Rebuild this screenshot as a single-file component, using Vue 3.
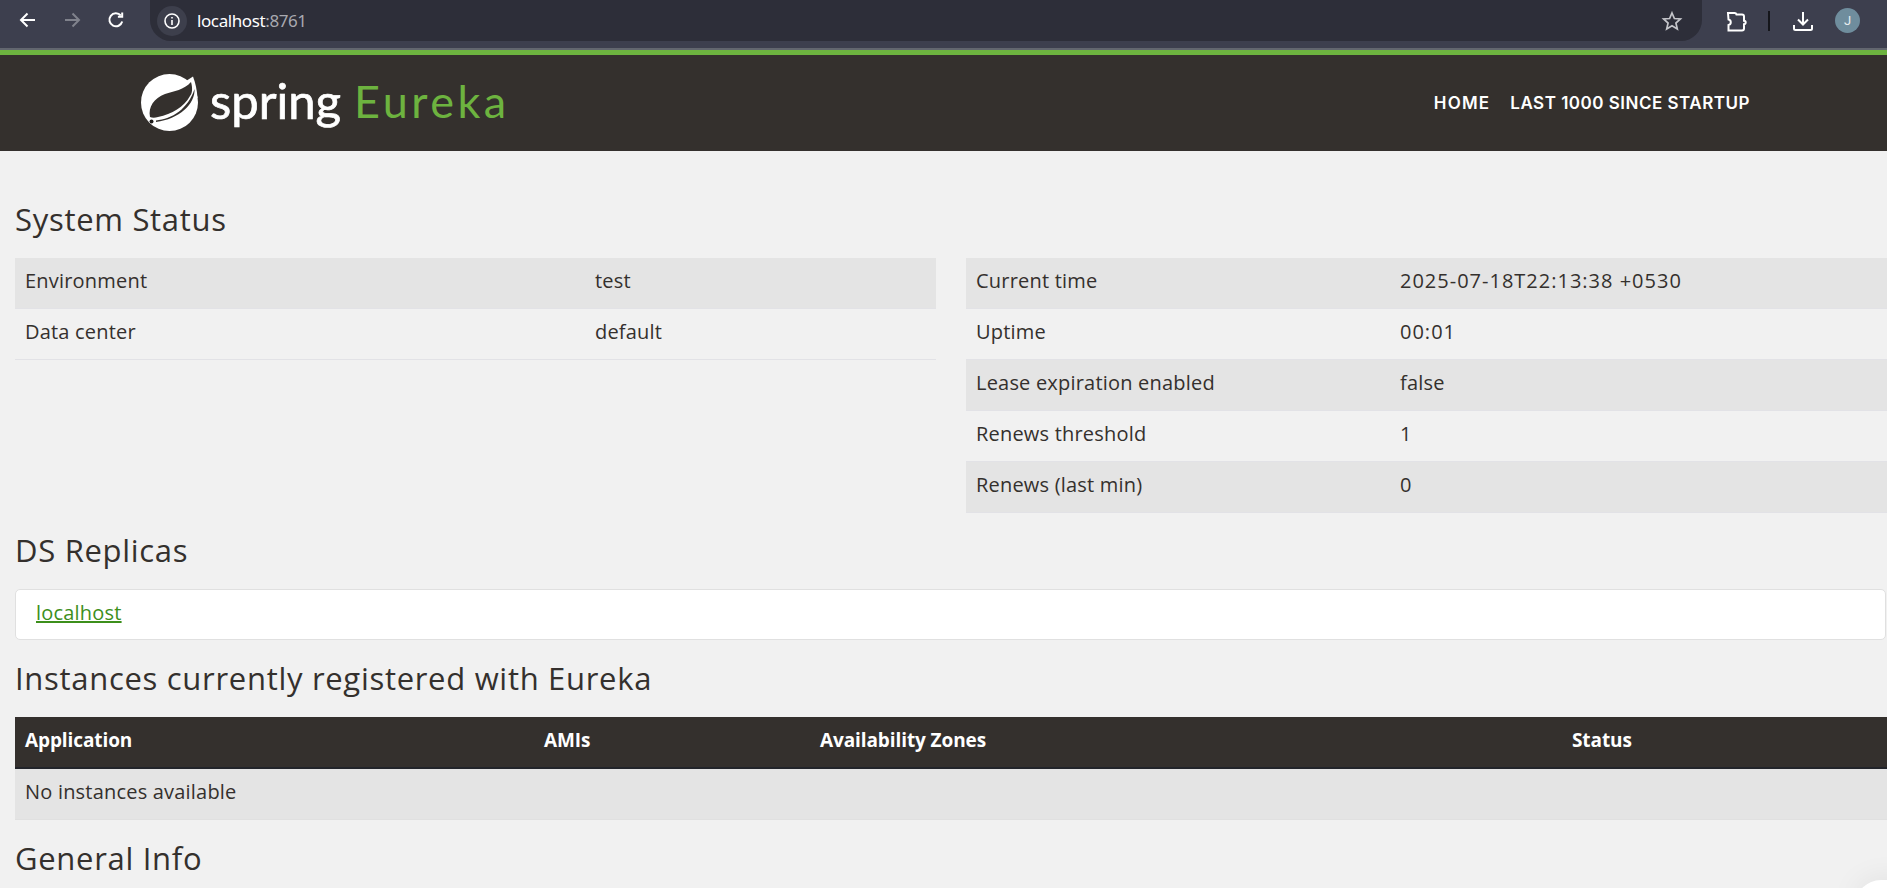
<script setup>
const leftRows = [
  ['Environment', 'test'],
  ['Data center', 'default'],
]
const rightRows = [
  ['Current time', '2025-07-18T22:13:38 +0530'],
  ['Uptime', '00:01'],
  ['Lease expiration enabled', 'false'],
  ['Renews threshold', '1'],
  ['Renews (last min)', '0'],
]
const hasDigits = (v) => /\d/.test(v)
</script>

<template>
  <div class="page">
    <div class="browser">
      <div class="nav-btns">
        <svg width="20" height="20" viewBox="0 0 20 20" class="ico"><path d="M17 10H3.5M9.5 3.5 3 10l6.500 6.500" /></svg>
        <svg width="20" height="20" viewBox="0 0 20 20" class="ico dim"><path d="M3 10h13.500M10.500 3.500 17 10l-6.500 6.500" /></svg>
        <svg width="20" height="20" viewBox="0 0 20 20" class="ico"><path d="M16.200 11.500A6.500 6.500 0 1 1 14.800 5.500" /><path d="M16.200 2.500v4.300h-4.300" /></svg>
      </div>
      <div class="omnibox">
        <span class="info">
          <svg width="18" height="18" viewBox="0 0 18 18" class="ico thin"><circle cx="9" cy="9" r="7" /><path d="M9 8v5M9 5v1.500" /></svg>
        </span>
        <span class="url">localhost<span class="port">:8761</span></span>
        <svg width="22" height="22" viewBox="0 0 22 22" class="ico star"><path d="m11 3 2.400 5.500 6 .5-4.500 4 1.400 5.900L11 15.800l-5.300 3.100L7.100 13 2.600 9l6-.5z" /></svg>
      </div>
      <div class="tools">
        <svg width="22" height="22" viewBox="0 0 22 22" class="ico puzzle"><path d="M3 3h6.500a2 2 0 0 1 2 1.500h5.500a2 2 0 0 1 2 2v4.300a1.700 1.700 0 0 1 0 3.400v4.300a2 2 0 0 1-2 2H3.500v-5.500a2.800 2.800 0 0 0 0-5.500z" /></svg>
        <span class="sep"></span>
        <svg width="22" height="22" viewBox="0 0 22 22" class="ico dl"><path d="M11 2v12M6 9.500l5 5 5-5M2 15v3.500a1.500 1.500 0 0 0 1.500 1.500h15a1.500 1.500 0 0 0 1.500-1.500V15" /></svg>
        <span class="avatar">J</span>
      </div>
    </div>
    <div class="strip"></div>

    <header class="topbar">
      <div class="brand">
        <svg class="leaf" width="58" height="58" viewBox="0 0 58 58">
          <circle cx="28.500" cy="28.500" r="28.500" fill="#fff" />
          <path fill="#34302d" d="M44 0H58V22L54.500 6 47 7Z" />
          <path fill="#fff" d="M45 7 52 2.500C54.500 9 56 16 56.500 24L52 24Z" />
          <path fill="#34302d" d="M9 43C7 33 13 24 24 20 33 17 43 16 50 8 52 15 51 20 49 22 43 33 31 40 17 43 14 44 11 44 9 43Z" />
          <path fill="#34302d" d="M15 46.500C31 45 47 35 53.500 15 54.500 30 38 45 15 48Z" />
          <circle cx="10.500" cy="47.500" r="2" fill="#1f1c1a" />
        </svg>
        <span class="spring">spring</span>
        <span class="eureka">Eureka</span>
      </div>
      <nav class="links">
        <a>HOME</a>
        <a>LAST 1000 SINCE STARTUP</a>
      </nav>
    </header>

    <main class="content">
      <h2>System Status</h2>
      <div class="status">
        <table class="info-table left">
          <tbody>
            <tr v-for="row in leftRows" :key="row[0]">
              <td>{{ row[0] }}</td>
              <td>{{ row[1] }}</td>
            </tr>
          </tbody>
        </table>
        <table class="info-table right">
          <tbody>
            <tr v-for="row in rightRows" :key="row[0]">
              <td>{{ row[0] }}</td>
              <td :class="{ digits: hasDigits(row[1]) }">{{ row[1] }}</td>
            </tr>
          </tbody>
        </table>
      </div>

      <h2>DS Replicas</h2>
      <div class="panel"><a href="#">localhost</a></div>

      <h2>Instances currently registered with Eureka</h2>
      <table class="instances">
        <thead>
          <tr>
            <th>Application</th>
            <th>AMIs</th>
            <th>Availability Zones</th>
            <th>Status</th>
          </tr>
        </thead>
        <tbody>
          <tr>
            <td colspan="4">No instances available</td>
          </tr>
        </tbody>
      </table>

      <h2>General Info</h2>
    </main>
    <div class="corner"></div>
  </div>
</template>

<style scoped>
.page {
  position: relative;
  height: 888px;
  overflow: hidden;
  background: #f1f1f1;
  color: #34302d;
  font-family: "Open Sans", "Liberation Sans", sans-serif;
}

.browser {
  display: flex;
  align-items: flex-start;
  height: 48px;
  background: #3d3f4e;
}

.nav-btns {
  display: flex;
  gap: 24px;
  width: 150px;
  padding: 10px 0 0 18px;
  box-sizing: border-box;
}

.ico {
  fill: none;
  stroke: #fff;
  stroke-width: 2;
}

.ico.dim {
  stroke: #80828c;
}

.ico.thin {
  stroke-width: 1.6;
}

.omnibox {
  display: flex;
  align-items: center;
  width: 1552px;
  height: 41px;
  padding-left: 7px;
  box-sizing: border-box;
  background: #2d2e39;
  border-radius: 0 0 21px 21px;
}

.info {
  display: flex;
  align-items: center;
  justify-content: center;
  width: 30px;
  height: 30px;
  border-radius: 50%;
  background: #3d3f4c;
}

.url {
  margin-left: 10px;
  flex: 1;
  color: #fff;
  font-family: "Noto Sans", sans-serif;
  font-size: 17px;
  letter-spacing: -0.4px;
}

.port {
  color: #a8a9b0;
}

.star {
  margin-right: 19px;
  stroke: #c4c5ca;
  stroke-width: 1.7;
}

.tools {
  display: flex;
  align-items: center;
  height: 41px;
  padding-left: 23px;
}

.sep {
  width: 2px;
  height: 20px;
  margin: 0 22px 0 21px;
  background: #15161b;
}

.avatar {
  width: 25px;
  height: 25px;
  margin-left: 21px;
  border-radius: 50%;
  background: #6f8d9d;
  color: #e8edf0;
  font-family: "Roboto", sans-serif;
  font-size: 13px;
  line-height: 25px;
  text-align: center;
}

.strip {
  height: 7px;
  box-sizing: border-box;
  border-top: 2px solid #62666f;
  background: #6db33f;
}

.topbar {
  display: flex;
  align-items: center;
  justify-content: space-between;
  height: 96px;
  padding: 0 137px 0 141px;
  background: #34302d;
}

.brand {
  display: flex;
  align-items: center;
}

.spring {
  margin: 0 0 6px 11px;
  color: #fff;
  font-family: "Lato", sans-serif;
  font-size: 49px;
  line-height: 1;
  -webkit-text-stroke: 0.7px #fff;
}

.eureka {
  margin: 0 0 4px 13px;
  color: #6db33f;
  font-family: "Lato", sans-serif;
  font-size: 45px;
  line-height: 1;
  letter-spacing: 3.5px;
}

.links {
  display: flex;
  gap: 20px;
}

.links a {
  color: #fff;
  font-family: "Inter", sans-serif;
  font-size: 17px;
  font-weight: 600;
  letter-spacing: 0.5px;
}

.links a:first-child {
  letter-spacing: 1.2px;
}

.content {
  padding: 30px 0 0 15px;
}

h2 {
  margin: 23px 0 24px;
  font-size: 31px;
  font-weight: 500;
  line-height: 30px;
  letter-spacing: 0.7px;
}

.status {
  display: grid;
  grid-template-columns: 921px 921px;
  gap: 30px;
  align-items: start;
  margin-bottom: -1px;
}

table {
  width: 100%;
  border-collapse: collapse;
  table-layout: fixed;
  font-size: 20px;
  letter-spacing: 0.2px;
}

.info-table td {
  height: 44px;
  padding: 0 10px 6px;
  border-bottom: 1px solid #e2e2e6;
}

.info-table td.digits {
  letter-spacing: 1px;
}

.info-table tr:nth-child(odd) td {
  background: #e4e4e4;
}

.info-table.left td:first-child {
  width: 550px;
}

.info-table.right td:first-child {
  width: 404px;
}

.panel {
  height: 51px;
  margin-right: 1px;
  padding: 0 20px;
  box-sizing: border-box;
  background: #fff;
  border: 1px solid #e0e0e0;
  border-radius: 5px;
  font-size: 20px;
  line-height: 46px;
  letter-spacing: 0.2px;
}

.panel a {
  color: #3c8f1b;
}

.instances th {
  height: 46px;
  padding: 0 10px 4px;
  background: #34302d;
  border-bottom: 2px solid #22242a;
  color: #fff;
  font-size: 19px;
  font-weight: 700;
  letter-spacing: -0.1px;
  text-align: left;
}

.instances th:nth-child(1) {
  width: 499px;
}

.instances th:nth-child(2) {
  width: 256px;
}

.instances th:nth-child(3) {
  width: 732px;
}

.instances td {
  height: 44px;
  padding: 0 10px 6px;
  background: #e4e4e4;
  border-bottom: 1px solid #e0e0e0;
}

.corner {
  position: absolute;
  right: -20px;
  bottom: -20px;
  width: 52px;
  height: 28px;
  border-radius: 26px 0 0 0;
  background: #fff;
  box-shadow: 0 0 30px rgba(0, 0, 0, 0.08);
}
</style>
